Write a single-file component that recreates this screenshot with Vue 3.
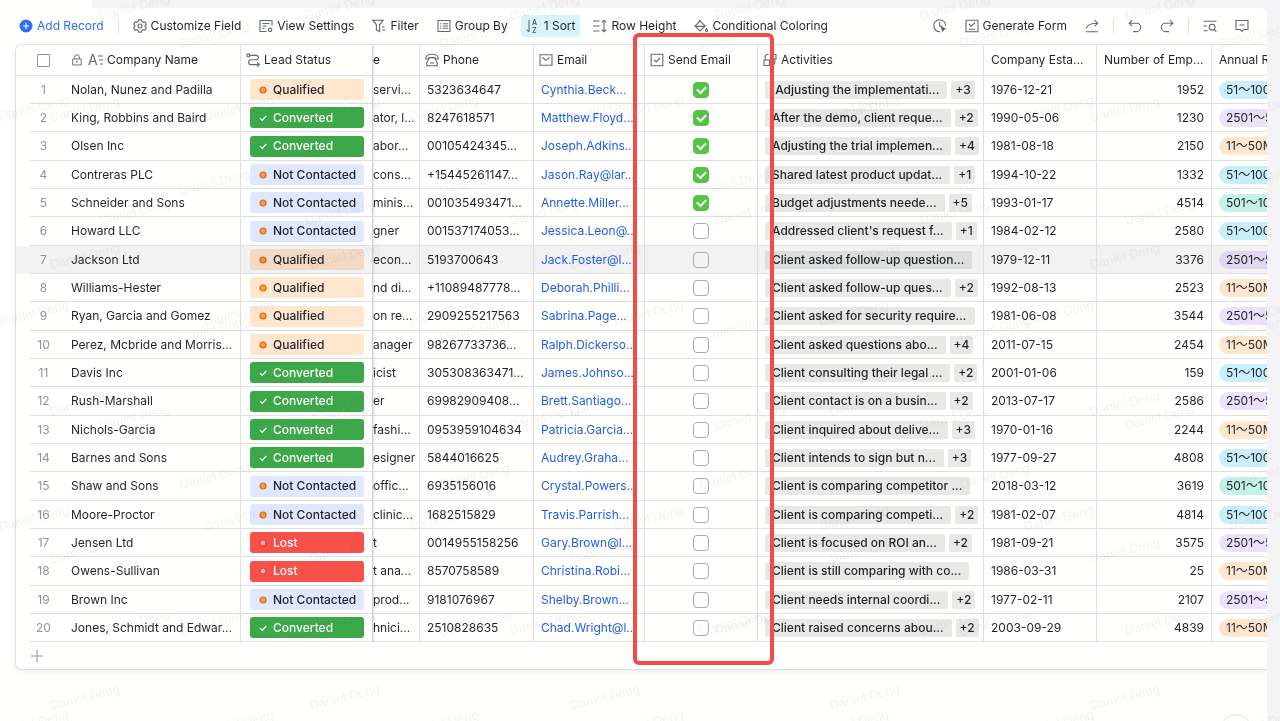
<template>
  <div class="page">
    <div class="panel">
      <div class="toolbar" role="toolbar" aria-label="View toolbar">
        <button class="tool primary" type="button">
          <svg class="icon" viewBox="0 0 14 14">
            <circle cx="7" cy="7" r="6.5" fill="#336df4" stroke="none" />
            <path d="M7 4v6M4 7h6" stroke="#fff" />
          </svg>
          Add Record
        </button>
        <span class="divider"></span>
        <button
          v-for="tool in leftTools"
          :key="tool.label"
          type="button"
          class="tool"
          :class="{ active: tool.active }"
        >
          <svg class="icon" viewBox="0 0 14 14">
            <path :d="icons[tool.icon]" />
            <template v-if="tool.icon === 'sort'">
              <text x="6" y="6" class="sort-letter">A</text>
              <text x="6" y="14" class="sort-letter">Z</text>
            </template>
          </svg>
          {{ tool.label }}
        </button>
        <span class="spacer"></span>
        <button type="button" class="tool" aria-label="Automation">
          <svg class="icon" viewBox="0 0 14 14">
            <path :d="icons.clock" />
            <path d="M7.5 7.5l6 2.2-2.6 1.1-1.1 2.7z" fill="#51565d" stroke="none" />
          </svg>
        </button>
        <button type="button" class="tool">
          <svg class="icon" viewBox="0 0 14 14"><path :d="icons.form" /></svg>
          Generate Form
        </button>
        <button type="button" class="tool" aria-label="Share">
          <svg class="icon" viewBox="0 0 14 14"><path :d="icons.share" /></svg>
        </button>
        <span class="divider"></span>
        <button type="button" class="tool" aria-label="Undo">
          <svg class="icon" viewBox="0 0 14 14"><path :d="icons.undo" /></svg>
        </button>
        <button type="button" class="tool" aria-label="Redo">
          <svg class="icon" viewBox="0 0 14 14"><path :d="icons.redo" /></svg>
        </button>
        <span class="divider"></span>
        <button type="button" class="tool" aria-label="Find">
          <svg class="icon" viewBox="0 0 14 14"><path :d="icons.find" /></svg>
        </button>
        <button type="button" class="tool" aria-label="Comments">
          <svg class="icon" viewBox="0 0 14 14"><path :d="icons.comment" /></svg>
        </button>
      </div>

      <div class="grid">
        <table>
          <colgroup>
            <col v-for="name in columns" :key="name" :class="'col-' + name" />
          </colgroup>
          <thead>
            <tr>
              <th class="gutter"></th>
              <th class="number">
                <input type="checkbox" class="select-all" aria-label="Select all records" />
              </th>
              <th class="company">
                <div class="head">
                  <svg class="icon lock" viewBox="0 0 14 14"><path :d="icons.lock" /></svg>
                  <svg class="icon" viewBox="0 0 14 14">
                    <text x="-1" y="12" class="field-letter">A</text>
                    <path d="M9 3h5M10 7h4M11 11h3" />
                  </svg>
                  Company Name
                </div>
              </th>
              <th class="status">
                <div class="head">
                  <svg class="icon" viewBox="0 0 14 14"><path :d="icons.flow" /></svg>
                  Lead Status
                </div>
              </th>
              <th class="title">e</th>
              <th>
                <div class="head">
                  <svg class="icon" viewBox="0 0 14 14"><path :d="icons.phone" /></svg>
                  Phone
                </div>
              </th>
              <th>
                <div class="head">
                  <svg class="icon" viewBox="0 0 14 14"><path :d="icons.mail" /></svg>
                  Email
                </div>
              </th>
              <th>
                <div class="head">
                  <svg class="icon" viewBox="0 0 14 14"><path :d="icons.check" /></svg>
                  Send Email
                </div>
              </th>
              <th>
                <div class="head">
                  <svg class="icon" viewBox="0 0 14 14"><path :d="icons.link" /></svg>
                  Activities
                </div>
              </th>
              <th class="plain">Company Esta...</th>
              <th class="plain">Number of Emp...</th>
              <th class="plain last">Annual Revenue</th>
            </tr>
          </thead>
          <tbody>
            <tr v-for="(row, i) in rows" :key="row.company" :class="{ hovered: i === 6 }">
              <td class="gutter"></td>
              <td class="number">{{ i + 1 }}</td>
              <td class="company">{{ row.company }}</td>
              <td class="status">
                <div class="badge" :class="row.status.kind">
                  <svg class="mark" viewBox="0 0 10 10">
                    <path v-if="row.status.kind === 'converted'" d="M2 5.2l2.2 2.2L8.2 3" />
                    <circle v-else cx="5" cy="5" r="3" />
                  </svg>
                  {{ row.status.label }}
                </div>
              </td>
              <td class="title">{{ row.title }}</td>
              <td>{{ row.phone }}</td>
              <td><a href="#" @click.prevent>{{ row.email }}</a></td>
              <td class="send">
                <input
                  v-model="row.send"
                  type="checkbox"
                  class="tick"
                  :aria-label="'Send email to ' + row.company"
                />
              </td>
              <td>
                <div class="chips">
                  <span class="chip">{{ row.activity }}</span>
                  <span v-if="row.more" class="chip more">+{{ row.more }}</span>
                </div>
              </td>
              <td>{{ row.date }}</td>
              <td class="employees">{{ row.employees }}</td>
              <td class="last"><span class="pill" :class="row.revenue.tone">{{ row.revenue.label }}</span></td>
            </tr>
          </tbody>
        </table>
        <button type="button" class="add-row" aria-label="Add row">
          <svg viewBox="0 0 14 14"><path d="M7 1v12M1 7h12" /></svg>
        </button>
      </div>
    </div>

    <svg class="watermark" aria-hidden="true">
      <defs>
        <pattern id="wm-wide" width="260" height="147" patternUnits="userSpaceOnUse">
          <text x="51" y="122" transform="rotate(-14 51 122)">Daniel Deng</text>
          <text x="181" y="48" transform="rotate(-14 181 48)">Daniel Deng</text>
        </pattern>
        <pattern id="wm-dense" width="205" height="205" patternUnits="userSpaceOnUse">
          <text x="101" y="20" transform="rotate(-14 101 20)">Daniel Deng</text>
          <text x="0" y="121" transform="rotate(-14 0 121)">Daniel Deng</text>
        </pattern>
      </defs>
      <rect width="100%" height="100%" fill="url(#wm-wide)" />
      <rect width="100%" height="100%" fill="url(#wm-dense)" />
    </svg>
    <div class="column-highlight"></div>
    <button type="button" class="help" aria-label="Help"></button>
  </div>
</template>

<script setup>
import { ref } from 'vue'

const columns = [
  'gutter', 'number', 'company', 'status', 'title', 'phone',
  'email', 'send', 'activities', 'established', 'employees', 'revenue'
]

const icons = {
  gear: 'M5.6.9h2.8l.5 1.6 1.3.8 1.7-.4 1.4 2.4-1.2 1.2v1l1.2 1.2-1.4 2.4-1.7-.4-1.3.8-.5 1.6H5.6l-.5-1.6-1.3-.8-1.7.4L.7 8.7l1.2-1.2v-1L.7 5.3l1.4-2.4 1.7.4 1.3-.8zM5 7a2 2 0 1 0 4 0a2 2 0 1 0-4 0',
  view: 'M13 6.5V1.5H1v11h6.5M3.5 4.5h7M3.5 7h4M3.5 9.5h2M9.4 10.8a1.7 1.7 0 1 0 3.4 0a1.7 1.7 0 1 0-3.4 0',
  filter: 'M.8 1.2h10.4L7.6 5.8v6.8L4.4 11V5.8zM10 8h2.5M10 11h3.5',
  group: 'M1 1.5h12v11H1zM3.2 4.7h1.2M6 4.7h5M3.2 7h1.2M6 7h5M3.2 9.3h1.2M6 9.3h5',
  sort: 'M3 1v12M.8 10.6L3 12.9',
  height: 'M0 2h6.5M0 7h6.5M0 12h6.5M11 1v12M8.8 3.4L11 1.2l2.2 2.2M8.8 10.6l2.2 2.2 2.2-2.2',
  bucket: 'M5 .8l6.2 6.2-5 5L1 6.9 6.2 2M1.5 7.4h9.2M12.5 9.6l.9 1.7a1 1 0 1 1-1.8 0z',
  clock: 'M12.7 6.7A6 6 0 1 0 7.2 12.7M6.7 3.3v4h3',
  form: 'M1 1.2h12v11.6H1zM4 5l2.2 2.2L10.2 3.4M4 10.2h6',
  share: 'M1 12.8h12M1.3 9.5C2 5.6 5.5 4.3 12.6 4.3M9.5 1.2l3.2 3.1-3.2 3.1',
  undo: 'M4.2 1.2L1.2 4.2l3 3M1.5 4.2h7a4.2 4.2 0 0 1 0 8.4H5',
  redo: 'M9.8 1.2l3 3-3 3M12.5 4.2h-7a4.2 4.2 0 0 0 0 8.4H9',
  find: 'M.5 2.2h13M.5 7h3.5M.5 11.8h4M6.2 8.2a2.9 2.9 0 1 0 5.8 0a2.9 2.9 0 1 0-5.8 0M11.2 10.4l2.2 2.4',
  comment: 'M1 1.5h12v9H8.7L7 12.4 5.3 10.5H1zM4.5 6h5',
  lock: 'M2 5.8h10v7H2zM4.3 5.8V3.6a2.7 2.7 0 0 1 5.4 0v2.2M7 8.5v1.8M6.2 8.6h1.6',
  flow: 'M.8 2.4a1.5 1.5 0 1 0 3 0a1.5 1.5 0 1 0-3 0M3.8 2.4h6.4a2.2 2.2 0 0 1 0 4.4H5a2.4 2.4 0 0 0 0 4.8h8M11 9.4l2.2 2.2-2.2 2.2',
  phone: 'M.8 6V4.4C1.6 2.2 4 1.2 7 1.2s5.4 1 6.2 3.2V6h-3V4.6H3.8V6zM3.6 6.4L1.8 9.6v3.2h10.4V9.600L10.400 6.400M5 10h4',
  mail: 'M1 1.8h12v10.4H1zM3.5 4.5L7 7.4l3.5-2.9',
  check: 'M1.2 1.2h11.6v11.6H1.2zM4 6.8L6.2 9 10 5',
  link: 'M1 7h5.5v5.5H1zM2.2 7V3.5a2 2 0 0 1 2-2h1.5M8.5 1.5H13V6H8.5zM11.8 6v3.5a2 2 0 0 1-2 2H9'
}

const leftTools = [
  { icon: 'gear', label: 'Customize Field' },
  { icon: 'view', label: 'View Settings' },
  { icon: 'filter', label: 'Filter' },
  { icon: 'group', label: 'Group By' },
  { icon: 'sort', label: '1 Sort', active: true },
  { icon: 'height', label: 'Row Height' },
  { icon: 'bucket', label: 'Conditional Coloring' }
]

const Q = { kind: 'qualified', label: 'Qualified' }
const C = { kind: 'converted', label: 'Converted' }
const N = { kind: 'waiting', label: 'Not Contacted' }
const L = { kind: 'lost', label: 'Lost' }

const cyan = { tone: 'cyan', label: '51～100M' }
const violet = { tone: 'violet', label: '2501～5000M' }
const orange = { tone: 'orange', label: '11～50M' }
const mint = { tone: 'mint', label: '501～1000M' }

const data = [
  ['Nolan, Nunez and Padilla', Q, 'servi...', '5323634647', 'Cynthia.Beck...', true, '\u00a0Adjusting the implementati...', 3, '1976-12-21', 1952, cyan],
  ['King, Robbins and Baird', C, 'ator, l...', '8247618571', 'Matthew.Floyd...', true, 'After the demo, client reque...', 2, '1990-05-06', 1230, violet],
  ['Olsen Inc', C, 'abor...', '00105424345...', 'Joseph.Adkins...', true, 'Adjusting the trial implemen...', 4, '1981-08-18', 2150, orange],
  ['Contreras PLC', N, 'cons...', '+15445261147...', 'Jason.Ray@lar...', true, 'Shared latest product updat...', 1, '1994-10-22', 1332, cyan],
  ['Schneider and Sons', N, 'minis...', '001035493471...', 'Annette.Miller...', true, 'Budget adjustments neede...', 5, '1993-01-17', 4514, mint],
  ['Howard LLC', N, 'gner', '001537174053...', 'Jessica.Leon@...', false, "Addressed client's request f...", 1, '1984-02-12', 2580, cyan],
  ['Jackson Ltd', Q, 'econ...', '5193700643', 'Jack.Foster@l...', false, 'Client asked follow-up question...', 0, '1979-12-11', 3376, violet],
  ['Williams-Hester', Q, 'nd di...', '+11089487778...', 'Deborah.Philli...', false, 'Client asked follow-up ques...', 2, '1992-08-13', 2523, orange],
  ['Ryan, Garcia and Gomez', Q, 'on re...', '2909255217563', 'Sabrina.Page...', false, 'Client asked for security require...', 0, '1981-06-08', 3544, violet],
  ['Perez, Mcbride and Morris...', Q, 'anager', '98267733736...', 'Ralph.Dickerso...', false, 'Client asked questions abo...', 4, '2011-07-15', 2454, orange],
  ['Davis Inc', C, 'icist', '305308363471...', 'James.Johnso...', false, 'Client consulting their legal ...', 2, '2001-01-06', 159, cyan],
  ['Rush-Marshall', C, 'er', '69982909408...', 'Brett.Santiago...', false, 'Client contact is on a busin...', 2, '2013-07-17', 2586, violet],
  ['Nichols-Garcia', C, 'fashi...', '0953959104634', 'Patricia.Garcia...', false, 'Client inquired about delive...', 3, '1970-01-16', 2244, orange],
  ['Barnes and Sons', C, 'esigner', '5844016625', 'Audrey.Graha...', false, 'Client intends to sign but n...', 3, '1977-09-27', 4808, cyan],
  ['Shaw and Sons', N, 'offic...', '6935156016', 'Crystal.Powers...', false, 'Client is comparing competitor ...', 0, '2018-03-12', 3619, mint],
  ['Moore-Proctor', N, 'clinic...', '1682515829', 'Travis.Parrish...', false, 'Client is comparing competi...', 2, '1981-02-07', 4814, cyan],
  ['Jensen Ltd', L, 't', '0014955158256', 'Gary.Brown@l...', false, 'Client is focused on ROI an...', 2, '1981-09-21', 3575, violet],
  ['Owens-Sullivan', L, 't ana...', '8570758589', 'Christina.Robi...', false, 'Client is still comparing with co...', 0, '1986-03-31', 25, orange],
  ['Brown Inc', N, 'prod...', '9181076967', 'Shelby.Brown...', false, 'Client needs internal coordi...', 2, '1977-02-11', 2107, violet],
  ['Jones, Schmidt and Edwar...', C, 'hnici...', '2510828635', 'Chad.Wright@l...', false, 'Client raised concerns abou...', 2, '2003-09-29', 4839, orange]
]

const rows = ref(data.map(([company, status, title, phone, email, send, activity, more, date, employees, revenue]) => ({
  company, status, title, phone, email, send, activity, more, date, employees, revenue
})))
</script>

<style>
body {
  margin: 0;
  background: #f3f4f6;
}
</style>

<style scoped>
.page {
  position: relative;
  min-height: 100vh;
  padding: 8px 13px 0 0;
  box-sizing: border-box;
  overflow: hidden;
  background: #f4f4f6;
  font-family: Inter, "Noto Sans CJK SC", sans-serif;
  font-size: 12px;
  line-height: 20px;
  color: #1f2329;
}

/* tab strip notch at the top left */
.page::before {
  content: '';
  position: absolute;
  top: 0;
  left: 0;
  width: 92px;
  height: 8px;
  background: #fffffd;
}

.panel {
  min-height: calc(100vh - 8px);
  background: #fffffd;
  border-radius: 0 6px 0 0;
  overflow: hidden;
}

.toolbar {
  display: flex;
  align-items: center;
  gap: 8px;
  height: 36px;
  padding: 0 13px 0 14px;
}

.tool {
  display: flex;
  align-items: center;
  gap: 4px;
  flex: none;
  height: 22px;
  padding: 0 5px;
  border: none;
  border-radius: 4px;
  background: none;
  font: inherit;
  color: inherit;
  white-space: nowrap;
  cursor: pointer;
}

.tool.primary {
  color: #336df4;
}

.tool.active {
  background: #d9f3fd;
}

.icon {
  flex: none;
  width: 14px;
  height: 14px;
  fill: none;
  stroke: #646a73;
  stroke-width: 1.1;
  overflow: visible;
}

.sort-letter {
  font-size: 7px;
  font-weight: 600;
  fill: #51565d;
  stroke: none;
}

.field-letter {
  font-size: 14px;
  fill: #646a73;
  stroke: none;
}

.divider {
  flex: none;
  width: 1px;
  height: 14px;
  margin: 0 1px;
  background: #dee0e3;
}

.spacer {
  flex: 1;
}

.grid {
  margin-left: 15px;
  border: 1px solid #dee0e3;
  border-right: none;
  border-radius: 6px 0 0 6px;
  overflow: hidden;
  box-shadow: 0 2px 4px rgba(31, 35, 41, 0.08);
}

table {
  width: 100%;
  table-layout: fixed;
  border-collapse: separate;
  border-spacing: 0;
}

.col-gutter { width: 14px; }
.col-number { width: 27px; }
.col-company { width: 184px; }
.col-status { width: 132px; }
.col-title { width: 47px; }
.col-phone { width: 114px; }
.col-email { width: 111px; }
.col-send { width: 113px; }
.col-activities { width: 226px; }
.col-established { width: 113px; }
.col-employees { width: 115px; }

th,
td {
  box-sizing: border-box;
  height: 28px;
  padding: 0 0 0 7px;
  border-right: 1px solid #dee0e3;
  border-bottom: 1px solid #dee0e3;
  overflow: hidden;
  text-align: left;
  font-weight: 400;
  white-space: nowrap;
}

tbody tr:nth-child(3n) td {
  height: 29px;
}

th {
  height: 31px;
  padding-left: 5px;
}

th.plain {
  padding-left: 7px;
}

.head {
  display: flex;
  align-items: center;
  gap: 4px;
}

td.gutter {
  border: none;
}

th.gutter {
  border-right: none;
}

th.number,
td.number {
  padding: 0;
  border-right: none;
  text-align: center;
  color: #8f959e;
}

th.company,
td.company {
  padding-left: 14px;
}

.lock {
  width: 12px;
  margin-right: 2px;
}

td.status {
  padding: 0 8px 0 9px;
}

th.status,
td.status {
  border-right-color: #cfd1d5;
}

th.title,
td.title {
  padding-left: 0;
  box-shadow: inset 2px 0 2px -1px rgba(31, 35, 41, 0.12);
}

th.last,
td.last {
  border-right: none;
}

td.send {
  padding: 0;
  text-align: center;
}

td.employees {
  padding: 0 7px 0 0;
  text-align: right;
}

tr.hovered td {
  background: #f2f2f2;
}

td a {
  color: #245bed;
  text-decoration: none;
}

.badge {
  display: flex;
  align-items: center;
  gap: 5px;
  height: 21px;
  padding-left: 8px;
  border-radius: 3px;
  font-weight: 500;
}

.hovered .badge,
.hovered .pill {
  mix-blend-mode: multiply;
}

.mark {
  width: 10px;
  height: 10px;
  fill: #ff9a3d;
  stroke: #d9670f;
  stroke-width: 1.2;
}

.qualified {
  background: #ffe6cf;
}

.waiting {
  background: #e0e7ff;
}

.converted {
  background: #3da849;
  color: #fff;
}

.converted .mark {
  fill: none;
  stroke: #fff;
}

.lost {
  background: #f85149;
  color: #fff;
}

.lost .mark {
  fill: #ffb3ae;
  stroke: #e23c39;
}

.select-all,
.tick {
  appearance: none;
  display: block;
  box-sizing: border-box;
  margin: 0 auto;
  border: 1px solid #8f959e;
  background: #fff;
}

.select-all {
  width: 13px;
  height: 13px;
  border-radius: 1px;
}

.tick {
  width: 16px;
  height: 16px;
  border-color: #a6aab2;
  border-radius: 4px;
}

.tick:checked {
  border-color: #56c346;
  background: #56c346;
}

.tick:checked::after {
  content: '';
  display: block;
  box-sizing: border-box;
  width: 9px;
  height: 6px;
  margin: 3px 0 0 3px;
  border: solid #fff;
  border-width: 0 0 2px 2px;
  transform: rotate(-45deg);
}

.hovered .tick {
  background: transparent;
}

.chips {
  display: flex;
  gap: 4px;
}

.chip {
  height: 18px;
  padding: 0 8px 0 7px;
  border-radius: 2px;
  background: rgba(31, 35, 41, 0.1);
  font-weight: 500;
  line-height: 18px;
}

.chip.more {
  padding: 0 4px;
}

.pill {
  display: block;
  width: max-content;
  height: 18px;
  padding: 0 7px;
  border-radius: 9px;
  line-height: 18px;
}

.cyan { background: #caeffc; }
.violet { background: #ece2fe; }
.orange { background: #ffe6cf; }
.mint { background: #c4f2e6; }

.add-row {
  display: flex;
  align-items: center;
  width: 100%;
  height: 27px;
  padding: 0 0 0 14px;
  border: none;
  background: none;
}

.add-row svg {
  width: 14px;
  height: 14px;
  stroke: #8f959e;
}

.watermark {
  position: absolute;
  inset: 0;
  width: 100%;
  height: 100%;
  pointer-events: none;
}

.watermark text {
  font-family: "Liberation Sans", sans-serif;
  font-size: 13px;
  fill: rgba(31, 35, 41, 0.06);
}

/* callout drawn round the Send Email column */
.column-highlight {
  position: absolute;
  top: 33px;
  left: 633px;
  box-sizing: border-box;
  width: 141px;
  height: 632px;
  border: 4px solid #f54a45;
  border-radius: 6px;
  pointer-events: none;
}

.help {
  position: absolute;
  right: 28px;
  bottom: -25px;
  width: 32px;
  height: 32px;
  border: 1px solid #e4e5e7;
  border-radius: 50%;
  background: #fffffd;
}
</style>
